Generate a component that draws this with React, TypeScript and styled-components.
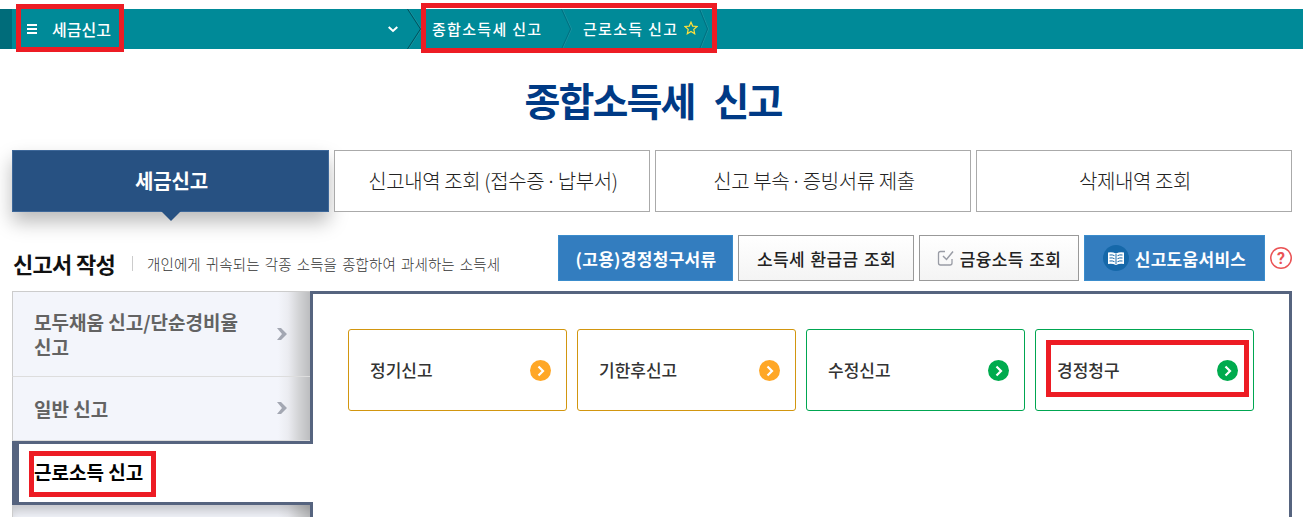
import styled, { createGlobalStyle } from "styled-components";

const GlobalStyle = createGlobalStyle`
  body {
    margin: 0;
    background: #fff;
    font-family: "Noto Sans CJK KR", "Noto Sans", sans-serif;
    color: #333;
  }
  * {
    box-sizing: border-box;
  }
`;

const Page = styled.div`
  position: relative;
  width: 1303px;
  height: 517px;
  overflow: hidden;
  padding-top: 9px;
`;

const TopBar = styled.nav`
  display: flex;
  align-items: center;
  height: 40px;
  background: #008a98;
  border-left: 12px solid #006c7a;
  color: #fff;
  font-weight: 500;
  line-height: 40px;
  white-space: nowrap;
`;

const MainMenu = styled.div`
  display: flex;
  align-items: center;
  width: 395px;
  padding: 0 9px 0 15px;
  font-size: 16px;
  svg:last-child {
    margin-left: auto;
  }
`;

const MenuLabel = styled.span`
  margin-left: 15px;
`;

const Crumb = styled.div<{ $width: number; $pad: number }>`
  display: flex;
  align-items: center;
  width: ${({ $width }) => $width}px;
  padding-left: ${({ $pad }) => $pad}px;
  font-size: 15px;
  letter-spacing: 1.3px;
  svg {
    margin: -2px 0 0 5.5px;
  }
`;

const Title = styled.h1`
  margin: 20px 0 0;
  height: 60px;
  padding-left: 3px;
  line-height: 60px;
  font-size: 39px;
  font-weight: 700;
  letter-spacing: -1.9px;
  word-spacing: 12px;
  text-align: center;
  color: #003a85;
`;

const Tabs = styled.div`
  display: grid;
  grid-template-columns: 317px repeat(3, 316px);
  gap: 5px;
  margin: 21px 11px 0 12px;
`;

const Tab = styled.div<{ $active?: boolean }>`
  position: relative;
  height: 62px;
  padding-left: 2px;
  border: 1px solid ${({ $active }) => ($active ? "#3d6799" : "#aaa")};
  background: ${({ $active }) => ($active ? "#275182" : "#fff")};
  box-shadow: ${({ $active }) =>
    $active ? "0 10px 18px rgba(0, 0, 0, 0.27)" : "none"};
  color: ${({ $active }) => ($active ? "#fff" : "#222")};
  font-size: 20px;
  font-weight: ${({ $active }) => ($active ? 700 : 300)};
  letter-spacing: ${({ $active }) => ($active ? "-0.1px" : "-0.4px")};
  line-height: 60px;
  text-align: center;
  white-space: nowrap;
`;

const Dot = styled.span`
  margin: 0 -2.5px;
`;

const Pointer = styled.i`
  position: absolute;
  left: 50%;
  top: 60px;
  margin-left: -10px;
  border: 10px solid transparent;
  border-top-color: #275182;
  border-bottom: 0;
`;

const Heading = styled.div`
  display: flex;
  align-items: center;
  height: 46px;
  margin: 23px 0 10px 12px;
  white-space: nowrap;
`;

const HeadingTitle = styled.h2`
  margin: 10px 0 0;
  width: 120px;
  padding-left: 1px;
  font-size: 22px;
  font-weight: 700;
  letter-spacing: -0.7px;
  line-height: 46px;
  color: #111;
`;

const HeadingNote = styled.p`
  margin: 10px 0 0;
  width: 426px;
  padding-left: 14px;
  border-left: 1px solid #ccc;
  font-size: 14.5px;
  font-weight: 300;
  letter-spacing: 0.1px;
  word-spacing: 1.8px;
  line-height: 15px;
  color: #333;
`;

const Actions = styled.div`
  display: flex;
  align-items: center;
  gap: 5px;
`;

const Button = styled.div<{ $width: number; $primary?: boolean }>`
  display: flex;
  align-items: center;
  justify-content: center;
  width: ${({ $width }) => $width}px;
  height: 46px;
  padding-left: 1px;
  border: 1px solid ${({ $primary }) => ($primary ? "#3a8ccc" : "#999")};
  background: ${({ $primary }) =>
    $primary ? "#337dbf" : "linear-gradient(#fff, #f4f4f4)"};
  color: ${({ $primary }) => ($primary ? "#fff" : "#222")};
  font-size: 17px;
  font-weight: ${({ $primary }) => ($primary ? 700 : 500)};
  letter-spacing: ${({ $primary }) => ($primary ? 0.3 : 0.4)}px;
  word-spacing: 1.2px;
  svg {
    margin: 0 6px 0 -1px;
    flex: none;
  }
`;

const Help = styled.span`
  display: flex;
  align-items: center;
  justify-content: center;
  width: 22px;
  height: 22px;
  box-shadow: inset 0 0 0 1.5px #ea5355;
  border-radius: 50%;
  color: #ea5355;
  font: 700 16px Roboto, sans-serif;
`;

const Content = styled.div`
  display: flex;
  height: 260px;
  margin: 0 11px 0 12px;
`;

const SideMenu = styled.div`
  position: relative;
  z-index: 1;
  width: 298px;
  border-top: 1px solid #ccc;
  color: #636363;
  font-size: 19px;
  font-weight: 700;
  line-height: 25px;
`;

const SideItem = styled.div<{ $height: number; $shaded?: boolean }>`
  display: flex;
  align-items: center;
  justify-content: space-between;
  height: ${({ $height }) => $height}px;
  padding: 0 23px 1px 21px;
  border-left: 1px solid #ccc;
  border-bottom: 1px solid #ddd;
  background: linear-gradient(
    to right,
    #f3f5fb 265px,
    #ebecf1 275px,
    #d2d3d5 286px,
    #bcbdbf 297px
  );
  box-shadow: ${({ $shaded }) =>
    $shaded ? "inset 4px 14px 12px -8px rgba(0, 0, 0, 0.2)" : "none"};
`;

const ActiveItem = styled.div`
  width: 301px;
  height: 64px;
  padding-left: 15px;
  border: solid #56647f;
  border-width: 3px 0 3px 7px;
  background: #fff;
  color: #000;
  line-height: 56px;
`;

const Panel = styled.div`
  display: flex;
  align-items: flex-start;
  gap: 10px;
  width: 982px;
  padding: 35px 0 0 35px;
  border: 3px solid #56647f;
`;

const Card = styled.div<{ $color: string }>`
  display: flex;
  align-items: center;
  justify-content: space-between;
  width: 219px;
  height: 82px;
  padding: 0 15px 0 21px;
  border: 1px solid ${({ $color }) => $color};
  border-radius: 3px;
  font-size: 17px;
  font-weight: 500;
`;

const CardName = styled.span`
  padding-bottom: 2px;
`;

// highlight frames drawn over the screen
const Mark = styled.div<{ $x: number; $y: number; $w: number; $h: number }>`
  position: absolute;
  z-index: 2;
  left: ${({ $x }) => $x}px;
  top: ${({ $y }) => $y}px;
  width: ${({ $w }) => $w}px;
  height: ${({ $h }) => $h}px;
  border: 5px solid #ed1c24;
`;

const marks = [
  { x: 16, y: 4, w: 108, h: 48 },
  { x: 421, y: 3, w: 296, h: 50 },
  { x: 29, y: 451, w: 127, h: 46 },
  { x: 1046, y: 340, w: 203, h: 57 },
];

const cards = [
  { name: "정기신고", color: "#d2960f", fill: "#ffa726" },
  { name: "기한후신고", color: "#d2960f", fill: "#ffa726" },
  { name: "수정신고", color: "#00a651", fill: "#00ab4e" },
  { name: "경정청구", color: "#00a651", fill: "#00ab4e" },
];

function Separator({ width, color }: { width: number; color: string }) {
  return (
    <svg width={width} height="40" fill="none">
      <path d={`M1.5 0L${width - 0.5} 20L1.5 40`} stroke="#1a929f" />
      <path d={`M0.5 0L${width - 1.5} 20L0.5 40`} stroke={color} />
    </svg>
  );
}

function SideArrow() {
  return (
    <svg width="10" height="12" fill="#a3a7b2">
      <path d="M0 0h4l6 6-6 6H0l5-6z" />
    </svg>
  );
}

function GoIcon({ fill }: { fill: string }) {
  return (
    <svg width="21" height="21" fill="none">
      <circle cx="10.5" cy="10.5" r="10.5" fill={fill} />
      <path d="M8.5 6.5L13 11l-4.500 4.500" stroke="#fff" strokeWidth="2.200" />
    </svg>
  );
}

function App() {
  return (
    <Page>
      <GlobalStyle />
      <TopBar>
        <MainMenu>
          <svg width="10" height="10" fill="#fff">
            <path d="M0 0h10v2H0zM0 4h10v2H0zM0 8h10v2H0z" />
          </svg>
          <MenuLabel>세금신고</MenuLabel>
          <svg width="10" height="7" fill="none" stroke="#fff" strokeWidth="2">
            <path d="M0.700 1L5 5l4.300-4" />
          </svg>
        </MainMenu>
        <Separator width={15} color="#00505c" />
        <Crumb $width={139} $pad={10}>
          종합소득세 신고
        </Crumb>
        <Separator width={11} color="#007080" />
        <Crumb $width={127} $pad={11}>
          근로소득 신고
          <svg
            width="14"
            height="14"
            fill="none"
            stroke="#ffe13a"
            strokeWidth="1.200"
          >
            <path d="M7 1.200l1.700 3.900 4.300.4-3.200 2.900.9 4.300L7 10.500l-3.700 2.200.9-4.300L1 5.500l4.300-.4z" />
          </svg>
        </Crumb>
        <Separator width={10} color="#007080" />
      </TopBar>
      <Title>종합소득세 신고</Title>
      <Tabs>
        <Tab $active>
          세금신고
          <Pointer />
        </Tab>
        <Tab>
          신고내역 조회 (접수증 <Dot>·</Dot> 납부서)
        </Tab>
        <Tab>
          신고 부속 <Dot>·</Dot> 증빙서류 제출
        </Tab>
        <Tab>삭제내역 조회</Tab>
      </Tabs>
      <Heading>
        <HeadingTitle>신고서 작성</HeadingTitle>
        <HeadingNote>
          개인에게 귀속되는 각종 소득을 종합하여 과세하는 소득세
        </HeadingNote>
        <Actions>
          <Button $width={175} $primary>
            (고용)경정청구서류
          </Button>
          <Button $width={176}>소득세 환급금 조회</Button>
          <Button $width={160}>
            <svg width="17" height="17" fill="none" stroke="#999ca5">
              <path d="M8 1.500H3.500Q1.500 1.500 1.500 3.500v9.500Q1.500 15 3.500 15h9.500Q15 15 15 13V9" strokeWidth="1.300" />
              <path d="M6 6l3.500 3.500L16 1.500" strokeWidth="1.500" />
            </svg>
            금융소득 조회
          </Button>
          <Button $width={181} $primary>
            <svg width="26" height="26" fill="none">
              <circle cx="13" cy="13" r="13" fill="#1668a9" />
              <path d="M5 7.500q4-1 8 1 4-2 8-1V19q-4-1-8 1-4-2-8-1z" fill="#fff" />
              <path
                d="M13 9v10M6.500 10q3-.5 5 .7M6.500 13q3-.5 5 .7M6.500 16q3-.5 5 .7M19.500 10q-3-.5-5 .7M19.500 13q-3-.5-5 .7M19.500 16q-3-.5-5 .7"
                stroke="#1668a9"
              />
            </svg>
            신고도움서비스
          </Button>
          <Help>?</Help>
        </Actions>
      </Heading>
      <Content>
        <SideMenu>
          <SideItem $height={85}>
            <span>
              모두채움 신고/단순경비율
              <br />
              신고
            </span>
            <SideArrow />
          </SideItem>
          <SideItem $height={64}>
            일반 신고
            <SideArrow />
          </SideItem>
          <ActiveItem>근로소득 신고</ActiveItem>
          <SideItem $height={64} $shaded />
        </SideMenu>
        <Panel>
          {cards.map(({ name, color, fill }) => (
            <Card key={name} $color={color}>
              <CardName>{name}</CardName>
              <GoIcon fill={fill} />
            </Card>
          ))}
        </Panel>
      </Content>
      {marks.map(({ x, y, w, h }) => (
        <Mark key={x} $x={x} $y={y} $w={w} $h={h} />
      ))}
    </Page>
  );
}

export default App;
